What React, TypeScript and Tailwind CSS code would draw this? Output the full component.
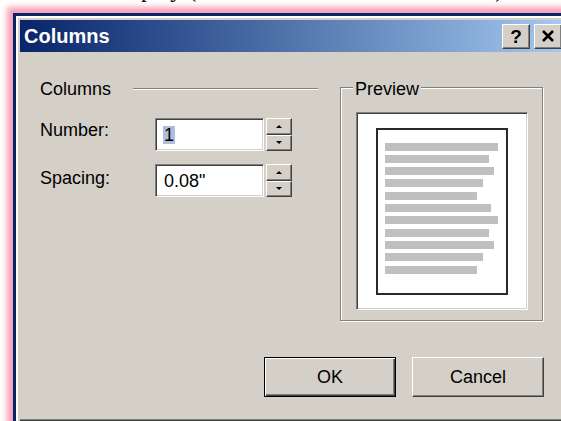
import React from "react";

// widths of the grey "text" lines drawn inside the preview page
const previewLines = [113, 104, 109, 98, 92, 106, 113, 104, 109, 98, 92];

const raised =
  "border border-t-white border-l-white border-r-[#404040] border-b-[#404040] shadow-[inset_-1px_-1px_0_#808080] bg-[#d4d0c8]";
const sunken =
  "border border-t-[#808080] border-l-[#808080] border-r-white border-b-white shadow-[inset_1px_1px_0_#404040,inset_-1px_-1px_0_#d4d0c8]";

const Spinner: React.FC = () => (
  <div className="ml-[2px] w-[26px] h-[33px] flex flex-col">
    <div className={`${raised} flex-1 flex items-center justify-center`}>
      <div className="w-0 h-0 border-x-[3px] border-x-transparent border-b-[3px] border-b-black" />
    </div>
    <div className={`${raised} flex-1 flex items-center justify-center`}>
      <div className="w-0 h-0 border-x-[3px] border-x-transparent border-t-[3px] border-t-black" />
    </div>
  </div>
);

const SpinField: React.FC<{ label: string; labelTop: string; children: React.ReactNode }> = ({
  label,
  labelTop,
  children,
}) => (
  <div className="flex items-start h-[33px]">
    <span className={`w-[115px] leading-[18px] ${labelTop}`}>{label}</span>
    <div className={`${sunken} w-[109px] h-[33px] bg-white flex items-center pl-[7px] leading-[18px]`}>
      {children}
    </div>
    <Spinner />
  </div>
);

const App: React.FC = () => {
  return (
    <div className="w-[561px] h-[421px] overflow-hidden bg-white text-black font-['Liberation_Sans',Arial,sans-serif] text-[18px]">
      {/* tail of the document line above the dialog */}
      <div className="h-[13px] overflow-hidden whitespace-nowrap font-['Liberation_Serif',serif] text-[24px] leading-[24px]">
        <div className="-mt-[23px] pl-[113px]">
          <span>display (</span>
          <span className="ml-[299px]">)</span>
        </div>
      </div>

      {/* dialog window */}
      <div className="ml-[13px] w-[557px] border-[3px] border-[#0a246a] shadow-[0_0_6px_6px_#f8a0b6]">
        <div className="border-t-2 border-l-2 border-white bg-[#d4d0c8] pt-[2px] px-[2px]">
          {/* title bar */}
          <div className="h-[32px] flex items-center pl-[4px] pr-[3px] bg-linear-to-r from-[#0a246a] to-[#a6caf0]">
            <span className="text-white font-bold text-[20px] leading-none">Columns</span>
            <div className="ml-auto flex gap-[4px]">
              <div className={`${raised} w-[28px] h-[25px] flex items-center justify-center font-bold text-[19px] leading-none`}>
                ?
              </div>
              <div className={`${raised} w-[28px] h-[25px] flex items-center justify-center`}>
                <svg width="14" height="12" viewBox="0 0 14 12">
                  <path d="M2 1 L12 11 M12 1 L2 11" stroke="black" strokeWidth="2.6" />
                </svg>
              </div>
            </div>
          </div>

          {/* body */}
          <div className="h-[367px] pl-[20px] pt-[26px] flex flex-col">
            <div className="flex">
              <div className="w-[278px] flex flex-col">
                <div className="h-[22px] flex items-center">
                  <span className="leading-[18px]">Columns</span>
                  <div className="flex-1 ml-[22px] h-[2px] border-t border-t-[#808080] border-b border-b-white" />
                </div>
                <div className="mt-[18px]">
                  <SpinField label="Number:" labelTop="mt-[3px]">
                    <span className="bg-[#b0bedc] px-[1px]">1</span>
                  </SpinField>
                </div>
                <div className="mt-[13px]">
                  <SpinField label="Spacing:" labelTop="mt-[5px]">
                    <span className="pl-[1px]">0.08"</span>
                  </SpinField>
                </div>
              </div>

              <fieldset className="ml-[22px] -mt-[2px] w-[203px] h-[245px] border border-[#808080] shadow-[inset_1px_1px_0_white,1px_1px_0_white]">
                <legend className="ml-[12px] px-[2px] pt-[4px] leading-[18px] bg-[#d4d0c8]">Preview</legend>
                <div className={`${sunken} ml-[15px] mt-[14px] w-[172px] h-[198px] bg-white flex items-center justify-center`}>
                  <div className="w-[132px] h-[167px] border-2 border-[#2a2a2a] pt-[13px] pl-[7px] flex flex-col gap-[4.33px]">
                    {previewLines.map((w, i) => (
                      <div key={i} className="h-[8px] bg-[#c0c0c0]" style={{ width: w }} />
                    ))}
                  </div>
                </div>
              </fieldset>
            </div>

            <div className="mt-[36px] ml-[224px] flex gap-[16px]">
              <button className="w-[132px] h-[40px] bg-[#d4d0c8] border border-black shadow-[inset_1px_1px_0_white,inset_-1px_-1px_0_#404040,inset_-2px_-2px_0_#808080] leading-none">
                OK
              </button>
              <button className={`${raised} w-[132px] h-[40px] leading-none`}>Cancel</button>
            </div>
          </div>
          <div className="h-[1px] bg-[#808080]" />
          <div className="h-[1px] bg-[#404040]" />
        </div>
      </div>
    </div>
  );
};

export default App;
